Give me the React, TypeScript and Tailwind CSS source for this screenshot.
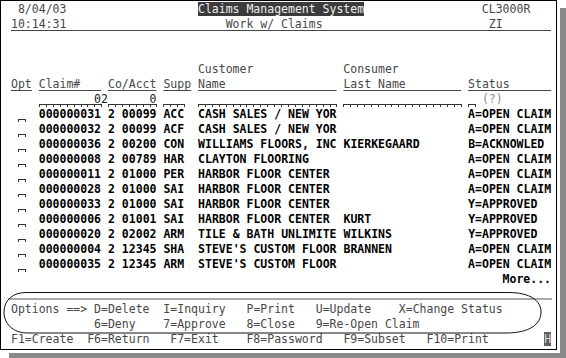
import type { ReactNode } from "react";

type Seg = { c: number; t: string; k?: string; f?: boolean };

const GRAY = "text-[#474747]";
const HEAD = "text-[#474747] underline decoration-[#474747] decoration-1 underline-offset-[2px]";
const DATA = "font-bold text-black";
const INPUT = "text-[#1a1a1a]";

function Field({ text, className = "" }: { text: string; className?: string }) {
  return (
    <span className={`relative inline-block ${className}`}>
      {text}
      <span className="absolute bottom-0 left-0 right-[-1px] h-[3px] border-t border-r border-[#333] bg-[image:repeating-linear-gradient(90deg,#333_0_1px,transparent_1px_1ch)]" />
    </span>
  );
}

function Line({ segs = [], className = "" }: { segs?: Seg[]; className?: string }) {
  const out: ReactNode[] = [];
  let pos = 0;
  segs.forEach((s, i) => {
    if (s.c > pos) out.push(" ".repeat(s.c - pos));
    out.push(
      s.f ? (
        <Field key={i} text={s.t} className={s.k} />
      ) : (
        <span key={i} className={s.k}>
          {s.t}
        </span>
      )
    );
    pos = s.c + s.t.length;
  });
  return <div className={`h-[15px] whitespace-pre leading-[15px] ${className}`}>{out}</div>;
}

const claims = [
  ["000000031", "00099", "ACC", "CASH SALES / NEW YOR", "", "A=OPEN CLAIM"],
  ["000000032", "00099", "ACF", "CASH SALES / NEW YOR", "", "A=OPEN CLAIM"],
  ["000000036", "00200", "CON", "WILLIAMS FLOORS, INC", "KIERKEGAARD", "B=ACKNOWLED"],
  ["000000008", "00789", "HAR", "CLAYTON FLOORING", "", "A=OPEN CLAIM"],
  ["000000011", "01000", "PER", "HARBOR FLOOR CENTER", "", "A=OPEN CLAIM"],
  ["000000028", "01000", "SAI", "HARBOR FLOOR CENTER", "", "A=OPEN CLAIM"],
  ["000000033", "01000", "SAI", "HARBOR FLOOR CENTER", "", "Y=APPROVED"],
  ["000000006", "01001", "SAI", "HARBOR FLOOR CENTER", "KURT", "Y=APPROVED"],
  ["000000020", "02002", "ARM", "TILE & BATH UNLIMITE", "WILKINS", "Y=APPROVED"],
  ["000000004", "12345", "SHA", "STEVE'S CUSTOM FLOOR", "BRANNEN", "A=OPEN CLAIM"],
  ["000000035", "12345", "ARM", "STEVE'S CUSTOM FLOOR", "", "A=OPEN CLAIM"],
];

export default function App() {
  return (
    <div className="relative h-[358px] w-[566px] overflow-hidden bg-white font-['DejaVu_Sans_Mono',monospace] text-[11.5px]">
      <div className="h-[350px] w-[557px] border border-black bg-white pl-[10px] pt-[1px] shadow-[3px_3px_0_0_#fff,9px_8px_0_0_#8a8a8a]">
        <Line
          segs={[
            { c: 1, t: "8/04/03", k: GRAY },
            { c: 27, t: "Claims Management System", k: "bg-[#3b3b3b] text-[#efefef]" },
            { c: 68, t: "CL3000R", k: GRAY },
          ]}
        />
        <Line
          segs={[
            {
              c: 0,
              t: "10:14:31".padEnd(31) + "Work w/ Claims".padEnd(38) + "ZI".padEnd(9),
              k: HEAD,
            },
          ]}
        />
        <Line />
        <Line />
        <Line
          segs={[
            { c: 27, t: "Customer", k: GRAY },
            { c: 48, t: "Consumer", k: GRAY },
          ]}
        />
        <Line
          segs={[
            { c: 0, t: "Opt", k: HEAD },
            { c: 4, t: "Claim#".padEnd(9), k: HEAD },
            { c: 14, t: "Co/Acct", k: HEAD },
            { c: 22, t: "Supp", k: HEAD },
            { c: 27, t: "Name".padEnd(20), k: HEAD },
            { c: 48, t: "Last Name".padEnd(17), k: HEAD },
            { c: 66, t: "Status".padEnd(12), k: HEAD },
          ]}
        />
        <Line
          segs={[
            { c: 4, t: "0".padStart(9), k: INPUT, f: true },
            { c: 13, t: "2", k: INPUT },
            { c: 14, t: "0".padStart(7), k: INPUT, f: true },
            { c: 22, t: "   ", f: true },
            { c: 27, t: " ".repeat(20), f: true },
            { c: 48, t: " ".repeat(17), f: true },
            { c: 66, t: " ", f: true },
            { c: 68, t: "(?)", k: "text-[#8c8c8c]" },
          ]}
        />
        {claims.map(([id, acct, supp, name, last, status]) => (
          <Line
            key={id}
            segs={[
              { c: 1, t: " ", f: true },
              { c: 4, t: id, k: DATA },
              { c: 14, t: "2", k: DATA },
              { c: 16, t: acct, k: DATA },
              { c: 22, t: supp, k: DATA },
              { c: 27, t: name, k: DATA },
              { c: 48, t: last, k: DATA },
              { c: 66, t: status, k: DATA },
            ]}
          />
        ))}
        <Line segs={[{ c: 71, t: "More...", k: DATA }]} />
        <div className="-ml-[3px] mb-[2px] h-[13px] w-[544px] border-b-2 border-[#a9a9a9]" />
        <Line
          segs={[
            { c: 0, t: "Options ==>", k: GRAY },
            { c: 12, t: "D=Delete", k: GRAY },
            { c: 22, t: "I=Inquiry", k: GRAY },
            { c: 34, t: "P=Print", k: GRAY },
            { c: 44, t: "U=Update", k: GRAY },
            { c: 56, t: "X=Change Status", k: GRAY },
          ]}
        />
        <Line
          segs={[
            { c: 12, t: "6=Deny", k: GRAY },
            { c: 22, t: "7=Approve", k: GRAY },
            { c: 34, t: "8=Close", k: GRAY },
            { c: 44, t: "9=Re-Open Claim", k: GRAY },
          ]}
        />
        <Line
          segs={[
            { c: 0, t: "F1=Create", k: GRAY },
            { c: 11, t: "F6=Return", k: GRAY },
            { c: 23, t: "F7=Exit", k: GRAY },
            { c: 34, t: "F8=Password", k: GRAY },
            { c: 48, t: "F9=Subset", k: GRAY },
            { c: 60, t: "F10=Print", k: GRAY },
            { c: 77, t: "H", k: "bg-[#5e5e5e] text-[#d6d6d6]" },
          ]}
        />
      </div>
      <svg className="pointer-events-none absolute left-0 top-0" width="566" height="358" viewBox="0 0 566 358">
        <path
          d="M 26 292.5 H 508 C 531 292.5 541 301 541 312 C 541 324 530 333 506 333 H 28 C 12 333 4 323 4 312 C 4 300 13 292.5 26 292.5 Z"
          fill="none"
          stroke="#111"
          strokeWidth="1"
        />
      </svg>
    </div>
  );
}
